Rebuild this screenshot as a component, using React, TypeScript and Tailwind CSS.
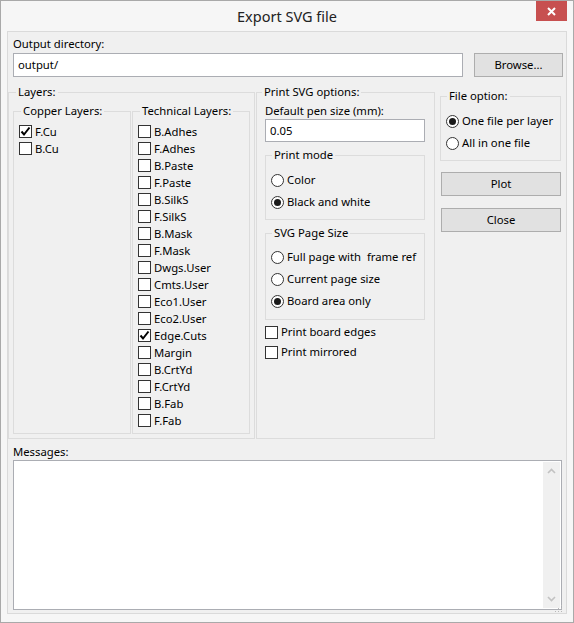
import type { ReactNode } from 'react';

const font = { fontFamily: '"Noto Sans", "Open Sans", Arial, sans-serif' };

const Check = ({ checked = false }: { checked?: boolean }) => (
  <span className="flex h-[13px] w-[13px] shrink-0 items-center justify-center border border-[#333333] bg-white">
    {checked && (
      <svg width="11" height="11" viewBox="0 0 11 11">
        <path d="M1.5 5.5 L4 8.5 L9.5 1.5" fill="none" stroke="#000" strokeWidth="2" />
      </svg>
    )}
  </span>
);

const Radio = ({ checked = false }: { checked?: boolean }) => (
  <span className="flex h-[13px] w-[13px] shrink-0 items-center justify-center rounded-full border border-[#333333] bg-white">
    {checked && <span className="h-[7px] w-[7px] rounded-full bg-[#1a1a1a]" />}
  </span>
);

const CheckRow = ({ label, checked, h = 'h-[17px]' }: { label: string; checked?: boolean; h?: string }) => (
  <div className={`flex ${h} items-center gap-[3px]`}>
    <Check checked={checked} />
    <span>{label}</span>
  </div>
);

const RadioRow = ({ label, checked }: { label: string; checked?: boolean }) => (
  <div className="flex h-[22px] items-center gap-[3px]">
    <Radio checked={checked} />
    <span className="whitespace-pre">{label}</span>
  </div>
);

const Group = ({
  title,
  className,
  legendClass = 'ml-[6px]',
  children,
}: {
  title: string;
  className: string;
  legendClass?: string;
  children: ReactNode;
}) => (
  <fieldset className={`border border-[#dcdcdc] ${className}`}>
    <legend className={`px-[2px] leading-[16px] ${legendClass}`}>{title}</legend>
    {children}
  </fieldset>
);

const Button = ({ label, className }: { label: string; className: string }) => (
  <button className={`flex items-center justify-center border border-[#adadad] bg-[#e1e1e1] ${className}`}>
    {label}
  </button>
);

const copperLayers = [
  { name: 'F.Cu', on: true },
  { name: 'B.Cu', on: false },
];

const technicalLayers = [
  'B.Adhes', 'F.Adhes', 'B.Paste', 'F.Paste', 'B.SilkS', 'F.SilkS', 'B.Mask', 'F.Mask',
  'Dwgs.User', 'Cmts.User', 'Eco1.User', 'Eco2.User', 'Edge.Cuts', 'Margin',
  'B.CrtYd', 'F.CrtYd', 'B.Fab', 'F.Fab',
];

export default function App() {
  return (
    <div
      style={font}
      className="flex h-[623px] w-[574px] flex-col border border-[#a9a9a9] bg-[#f6f6f6] text-[11.3px] leading-[16px] text-black"
    >
      {/* Title bar */}
      <div className="flex h-[30px] shrink-0">
        <div className="w-[37px]" />
        <div className="flex flex-1 items-center justify-center pb-[1px] text-[14.5px] text-[#222]">Export SVG file</div>
        <div className="mr-[6px] flex h-[20px] w-[31px] items-center justify-center bg-[#c75050]">
          <svg width="9" height="9" viewBox="0 0 9 9">
            <path d="M1 1 L8 8 M8 1 L1 8" stroke="#fff" strokeWidth="2" />
          </svg>
        </div>
      </div>

      {/* Client area */}
      <div className="mx-[6px] flex h-[583px] flex-col border border-[#dadada] bg-[#f0f0f0] pt-[4px]">
        <div className="ml-[5px]">Output directory:</div>
        <div className="mt-[1px] flex">
          <div className="ml-[5px] flex h-[24px] w-[450px] items-center border border-[#abadb3] bg-white px-[4px]">output/</div>
          <Button label="Browse..." className="ml-[11px] h-[24px] w-[89px]" />
        </div>

        <div className="mt-[7px] flex items-start">
          {/* Layers */}
          <Group title="Layers:" className="h-[355px] w-[247px]" legendClass="ml-[7px]">
            <div className="ml-[4px] mt-[3px] flex gap-[1px]">
              <Group title="Copper Layers:" className="h-[331px] w-[118px]" legendClass="ml-[7px]">
                <div className="ml-[5px] mt-[4px]">
                  {copperLayers.map((l) => (
                    <CheckRow key={l.name} label={l.name} checked={l.on} />
                  ))}
                </div>
              </Group>
              <Group title="Technical Layers:" className="h-[331px] w-[118px]" legendClass="ml-[7px]">
                <div className="ml-[5px] mt-[4px]">
                  {technicalLayers.map((name) => (
                    <CheckRow key={name} label={name} checked={name === 'Edge.Cuts'} />
                  ))}
                </div>
              </Group>
            </div>
          </Group>

          {/* Print SVG options */}
          <Group title="Print SVG options:" className="ml-[1px] h-[355px] w-[179px]" legendClass="ml-[5px]">
            <div className="ml-[8px] mt-[3px]">Default pen size (mm):</div>
            <div className="ml-[8px] flex h-[23px] w-[160px] items-center border border-[#abadb3] bg-white px-[4px]">0.05</div>
            <Group title="Print mode" className="ml-[8px] mt-[5px] h-[73px] w-[160px]">
              <div className="ml-[5px] mt-[6px]">
                <RadioRow label="Color" />
                <RadioRow label="Black and white" checked />
              </div>
            </Group>
            <Group title="SVG Page Size" className="ml-[8px] mt-[5px] h-[95px] w-[160px]">
              <div className="ml-[5px] mt-[5px]">
                <RadioRow label="Full page with  frame ref" />
                <RadioRow label="Current page size" />
                <RadioRow label="Board area only" checked />
              </div>
            </Group>
            <div className="ml-[8px] mt-[2px]">
              <CheckRow label="Print board edges" h="h-[20px]" />
              <CheckRow label="Print mirrored" h="h-[20px]" />
            </div>
          </Group>

          {/* Right column */}
          <div className="ml-[5px] flex w-[121px] flex-col">
            <Group title="File option:" className="mt-[4px] h-[73px] w-[121px]">
              <div className="ml-[5px] mt-[6px]">
                <RadioRow label="One file per layer" checked />
                <RadioRow label="All in one file" />
              </div>
            </Group>
            <Button label="Plot" className="ml-[1px] mt-[11px] h-[24px] w-[120px]" />
            <Button label="Close" className="ml-[1px] mt-[12px] h-[24px] w-[120px]" />
          </div>
        </div>

        <div className="ml-[5px] mt-[5px]">Messages:</div>
        <div className="relative ml-[5px] flex h-[150px] w-[549px] border border-[#abadb3] bg-white p-[1px]">
          <div className="flex-1" />
          <div className="flex w-[17px] flex-col items-center justify-between bg-[#f0f0f0] py-[6px]">
            <svg width="9" height="6" viewBox="0 0 9 6">
              <path d="M1 5 L4.5 1.5 L8 5" fill="none" stroke="#c2c2c2" strokeWidth="1.6" />
            </svg>
            <svg width="9" height="6" viewBox="0 0 9 6">
              <path d="M1 1 L4.5 4.5 L8 1" fill="none" stroke="#c2c2c2" strokeWidth="1.6" />
            </svg>
          </div>
          {/* resize grip */}
          <svg className="absolute -bottom-[4px] -right-[2px]" width="8" height="8" viewBox="0 0 8 8">
            <rect x="6" y="0" width="1" height="1" fill="#b8b8b8" />
            <rect x="3" y="3" width="1" height="1" fill="#b8b8b8" />
            <rect x="6" y="3" width="1" height="1" fill="#b8b8b8" />
            <rect x="0" y="6" width="1" height="1" fill="#b8b8b8" />
            <rect x="3" y="6" width="1" height="1" fill="#b8b8b8" />
            <rect x="6" y="6" width="1" height="1" fill="#b8b8b8" />
          </svg>
        </div>
      </div>
    </div>
  );
}
